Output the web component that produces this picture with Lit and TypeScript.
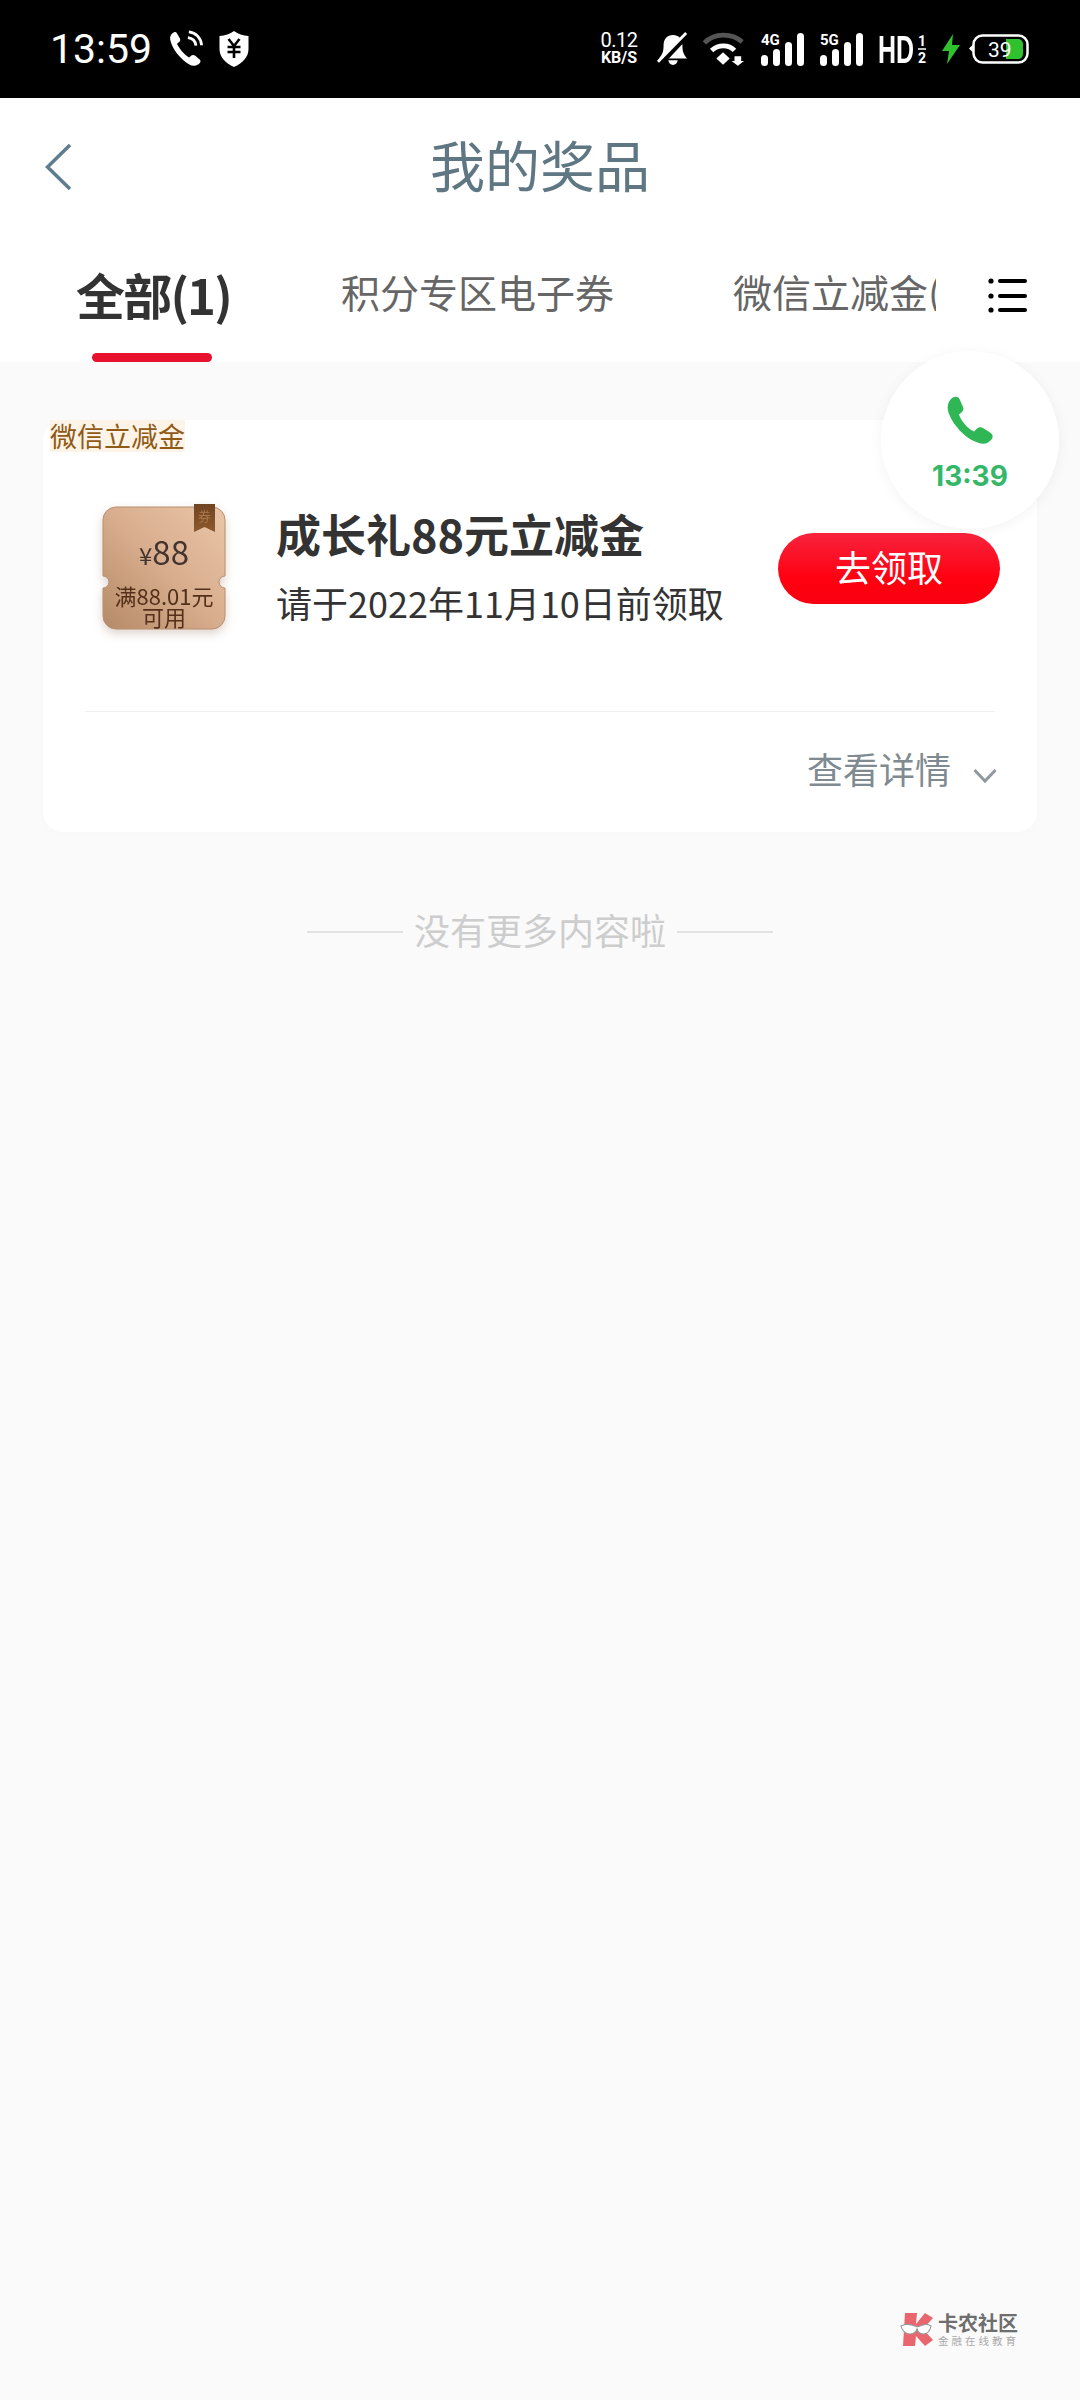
import { LitElement, html, css, svg } from "lit";
import { customElement } from "lit/decorators.js";

@customElement("app-root")
export class AppRoot extends LitElement {
  static styles = css`
    :host { display: block; width: 1080px; height: 2400px; position: relative; overflow: hidden; background: #fafafa; font-family: "Noto Sans CJK SC", "Noto Sans", sans-serif; }
    * { box-sizing: border-box; }
    svg { overflow: visible; }
    .status { height: 98px; background: #000; color: #fff; display: flex; align-items: center; padding: 0 51px 0 50px; }
    .time { font-family: Roboto, sans-serif; font-weight: 400; font-size: 41px; line-height: 1; width: 119px; }
    .left-ic { display: flex; gap: 16px; align-items: center; }
    .spacer { flex: 1; }
    .right { display: flex; align-items: center; }
    .speed { font-family: Roboto, sans-serif; width: 42px; display: flex; flex-direction: column; align-items: center; line-height: 1; margin-right: 17px; white-space: nowrap; margin-top: -2px; }
    .speed b { font-weight: 400; font-size: 20px; height: 19px; line-height: 19px; letter-spacing: -.5px; }
    .speed i { font-style: normal; font-weight: 700; font-size: 16px; height: 15px; line-height: 15px; }
    .hd { font-family: "Liberation Sans", sans-serif; font-weight: 700; font-size: 39px; line-height: 1; transform: scaleX(.64); transform-origin: left; width: 36px; margin-left: 15px; margin-right: 4px; }
    .mr14 { margin-right: 14px; } .mr15 { margin-right: 15px; } .mr16 { margin-right: 16px; } .mr9 { margin-right: 9px; }
    header { height: 134px; background: #fff; display: flex; align-items: center; justify-content: center; position: relative; }
    header h1 { margin: 0; font-size: 55px; font-weight: 400; color: #5f7683; line-height: 1; position: relative; top: -2px; }
    .back { position: absolute; left: 44px; top: 44px; }
    .tabs { height: 130px; background: #fff; display: flex; position: relative; align-items: flex-start; }
    .tab { font-size: 39px; color: #666; line-height: 1; white-space: nowrap; padding-top: 40px; }
    .tab.t1 { margin-left: 76px; font-size: 49px; font-weight: 700; color: #333; letter-spacing: -1.8px; padding-top: 37px; position: relative; height: 130px; width: 265px; }
    .tab.t2 { width: 392px; }
    .tab.t3 { width: 203px; overflow: hidden; }
    .bar { position: absolute; left: 16px; bottom: 0; width: 120px; height: 9px; border-radius: 5px; background: #e8112d; }
    .menu { margin-left: 52px; margin-top: 46px; }
    main { padding: 58px 43px 0; }
    .card { background: #fff; border-radius: 20px; height: 412px; position: relative; box-shadow: 0 2px 8px rgba(0,0,0,.015); display: flex; flex-direction: column; }
    .tag { position: absolute; left: 7px; top: 0; height: 32px; background: #fdf3e6; color: #8e5a16; font-size: 27px; line-height: 32px; width: 135px; white-space: nowrap; }
    .row { height: 291px; display: flex; align-items: center; padding: 0 37px 0 59px; }
    .coupon { width: 124px; height: 127px; flex: none; position: relative; margin-top: 4px; filter: drop-shadow(0 4px 5px rgba(120,80,50,.25)); }
    .coupon svg { position: absolute; inset: 0; }
    .amount { position: absolute; left: 0; right: 0; top: 29px; text-align: center; font-size: 33px; line-height: 36px; color: #443430; }
    .amount small { font-size: 24px; }
    .cond { position: absolute; left: 0; right: 0; top: 81px; text-align: center; font-size: 22px; line-height: 21px; color: #54301a; white-space: nowrap; }
    .info { margin-left: 50px; flex: 1; display: flex; flex-direction: column; margin-top: -1px; }
    .name { font-size: 45px; font-weight: 700; color: #333; line-height: 64px; white-space: nowrap; }
    .date { font-size: 36px; color: #333; line-height: 52px; margin-top: 10px; white-space: nowrap; }
    .go { width: 222px; height: 71px; flex: none; border-radius: 36px; background: linear-gradient(#f8233e, #ff0010 65%, #f90010); color: #fff; font-size: 36px; line-height: 66px; text-align: center; margin-top: 5px; }
    .divider { height: 1px; background: #f1f1f1; margin: 0 42px; }
    .more { flex: 1; display: flex; align-items: center; justify-content: flex-end; padding: 0 40px 8px 0; color: #808b91; font-size: 36px; }
    .more svg { margin-left: 22px; margin-top: 16px; }
    .end { display: flex; align-items: center; justify-content: center; margin-top: 67px; color: #cdcdcd; font-size: 36px; line-height: 60px; }
    .end span { width: 96px; height: 2px; background: #e2e2e2; margin-top: 6px; }
    .end em { font-style: normal; margin: 0 11px; }
    .float { position: absolute; left: 881px; top: 351px; width: 178px; height: 178px; border-radius: 50%; background: #fff; box-shadow: 0 2px 14px rgba(0,0,0,.05); display: flex; flex-direction: column; align-items: center; }
    .float svg { margin-top: 45px; }
    .float b { font-family: Inter, sans-serif; font-size: 28px; font-weight: 700; color: #35b768; line-height: 32px; margin-top: 16px; }
    .logo { position: absolute; left: 900px; top: 2312px; display: flex; align-items: flex-start; gap: 5px; }
    .logo div { display: flex; flex-direction: column; }
    .l1 { font-size: 20px; font-weight: 700; color: #6e6e6e; line-height: 22px; white-space: nowrap; }
    .l2 { font-size: 10.500px; color: #aaa; line-height: 12px; letter-spacing: 3px; white-space: nowrap; margin-top: 1px; }
  `;

  private signal(label: string, cls: string) {
    return html`<svg class=${cls} width="43" height="33" viewBox="0 0 43 33">
      <rect x="0" y="22" width="7" height="11" rx="3.500" fill="#fff"/>
      <rect x="12" y="16" width="7" height="17" rx="3.500" fill="#fff"/>
      <rect x="24" y="9" width="7" height="24" rx="3.500" fill="#fff"/>
      <rect x="36" y="0" width="7" height="33" rx="3.500" fill="#fff"/>
      <text x="0" y="12" font-family="Roboto, sans-serif" font-size="15" font-weight="700" fill="#fff">${label}</text>
    </svg>`;
  }

  render() {
    return html`
      <div class="status">
        <div class="time">13:59</div>
        <div class="left-ic">
          <svg width="34" height="38" viewBox="0 0 36 38" fill="none">
            <path d="M5 1.500C2 3 .5 6 1.500 10c2 9 10 19 20 25.500 3 1.800 7 2 10-.5 2-1.700 2.500-3.500 1-5l-5-4c-1.500-1-3-.8-4.200.2l-2 1.800C16 25 10.500 18 8.500 13.500l2.300-2c1.200-1.200 1.400-2.500.7-4L8.500 2.500C7.500 1 6.500.8 5 1.500Z" fill="#fff"/>
            <path d="M20 7c5 .5 8 4 8.500 8.500M21 .8C28.500 1.500 34 7.500 34.500 15" stroke="#fff" stroke-width="3"/>
          </svg>
          <svg width="30" height="36" viewBox="0 0 30 36">
            <path d="M15 0c4 3 9 4.500 14.500 5v13c0 8-6 14-14.500 18C6.500 32 .5 26 .5 18V5C6 4.500 11 3 15 0Z" fill="#fff"/>
            <path d="M9.500 8 15 15l5.500-7M8.500 16h13M8.500 21h13M15 15v12" stroke="#000" stroke-width="2.600" fill="none"/>
          </svg>
        </div>
        <div class="spacer"></div>
        <div class="right">
          <div class="speed"><b>0.12</b><i>KB/S</i></div>
          <svg class="mr14" width="32" height="36" viewBox="0 0 34 36">
            <path d="M17 3c6 0 10 4 10 11 0 6 1 10 5 14H2c4-4 5-8 5-14C7 7 11 3 17 3Z" fill="#fff"/>
            <path d="M12 30h10c-.5 3-2.500 5-5 5s-4.500-2-5-5Z" fill="#fff"/>
            <path d="M4 33 32 3" stroke="#000" stroke-width="6"/>
            <path d="M1 31.500 31 1" stroke="#fff" stroke-width="3"/>
          </svg>
          <svg class="mr16" width="42" height="33" viewBox="0 0 44 34">
            <path d="M1.500 10C12-.5 30-.5 41 9" stroke="#555" stroke-width="5" fill="none"/>
            <path d="M9 18c7-6.500 18-6.500 24 0" stroke="#fff" stroke-width="5" fill="none"/>
            <path d="M14 26.500 21 20l7 6.500-7 6.500Z" fill="#fff"/>
            <path d="M33 24h7v5h3l-6.500 5-6.500-5h3Z" fill="#fff"/>
          </svg>
          ${this.signal("4G", "mr16")}
          ${this.signal("5G", "")}
          <div class="hd">HD</div>
          <svg class="mr16" width="8" height="30" viewBox="0 0 8 30">
            <text x="0" y="12" font-family="Roboto, sans-serif" font-size="14" font-weight="700" fill="#fff">1</text>
            <path d="M0 15h8" stroke="#fff" stroke-width="1.500"/>
            <text x="0" y="29" font-family="Roboto, sans-serif" font-size="14" font-weight="700" fill="#fff">2</text>
          </svg>
          <svg class="mr9" width="18" height="30" viewBox="0 0 18 30">
            <path d="M11 0 0 17h7L5 30 18 11h-8Z" fill="#2fc22e"/>
          </svg>
          <svg width="60" height="30" viewBox="0 0 60 30">
            <path d="M3 12.500v4l-2-2Z" fill="#fff" stroke="#fff" stroke-width="1.500"/>
            <rect x="4.500" y="1.500" width="54" height="27" rx="9" fill="none" stroke="#fff" stroke-width="2.500"/>
            <path d="M37 5h12c3 0 5 2 5 6v8c0 4-2 6-5 6H37Z" fill="#2fc22e"/>
            <text x="19" y="22.500" font-family="Roboto, sans-serif" font-size="21" fill="#fff">39</text>
          </svg>
        </div>
      </div>

      <header>
        <svg class="back" width="30" height="50" viewBox="0 0 30 50" fill="none"><path d="M26 3 3.500 25 26 47" stroke="#5f7d8f" stroke-width="3.500"/></svg>
        <h1>我的奖品</h1>
      </header>

      <nav class="tabs">
        <div class="tab t1">全部(1)<div class="bar"></div></div>
        <div class="tab t2">积分专区电子券</div>
        <div class="tab t3">微信立减金(1)</div>
        <svg class="menu" width="40" height="36" viewBox="0 0 40 36">
          ${[3, 18, 32].map(
            (y) => svg`<circle cx="3" cy=${y} r="2.600" fill="#000"/><rect x="10" y=${y - 2} width="29" height="4" rx="2" fill="#000"/>`
          )}
        </svg>
      </nav>

      <main>
        <section class="card">
          <div class="tag">微信立减金</div>
          <div class="row">
            <div class="coupon">
              <svg width="124" height="127" viewBox="0 0 124 127">
                <defs>
                  <linearGradient id="cg" x1="1" y1="0" x2="0" y2="1">
                    <stop offset="0" stop-color="#eac6a8"/>
                    <stop offset=".5" stop-color="#d8ad8d"/>
                    <stop offset="1" stop-color="#b58a68"/>
                  </linearGradient>
                  <linearGradient id="bm" x1="0" y1="0" x2="0" y2="1">
                    <stop offset="0" stop-color="#704322"/>
                    <stop offset="1" stop-color="#8d5a2c"/>
                  </linearGradient>
                </defs>
                <path d="M14 3H110a13 13 0 0 1 13 13V72a6 6 0 0 0 0 12V112a13 13 0 0 1-13 13H14A13 13 0 0 1 1 112V84a6 6 0 0 0 0-12V16A13 13 0 0 1 14 3Z" fill="url(#cg)" stroke="#b98e6e" stroke-width="1"/>
                <path d="M92 0h21v28l-10.500-5L92 28Z" fill="url(#bm)"/>
                <text x="96" y="17" font-size="13" fill="#a9764a" font-family="Noto Sans CJK SC, sans-serif">券</text>
              </svg>
              <div class="amount"><small>¥</small>88</div>
              <div class="cond">满88.01元<br />可用</div>
            </div>
            <div class="info">
              <div class="name">成长礼88元立减金</div>
              <div class="date">请于2022年11月10日前领取</div>
            </div>
            <div class="go">去领取</div>
          </div>
          <div class="divider"></div>
          <div class="more">查看详情
            <svg width="24" height="16" viewBox="0 0 24 16" fill="none"><path d="M1.500 2 12 13 22.500 2" stroke="#8f999e" stroke-width="3"/></svg>
          </div>
        </section>
        <div class="end"><span></span><em>没有更多内容啦</em><span></span></div>
      </main>

      <div class="float">
        <svg width="46" height="48" viewBox="0 0 46 48">
          <path d="M4 3C7 0 11 0 12.500 3L16 11C17 13.500 16 15 14.500 16.500L12 18.500C14 25 21 33 27 35.500L30 32.500C32 31 34 31 36 32L43 36.500C46 38.500 46.500 41 44.500 43.500C41 47.500 37 48.500 32 47C18 43 5 28 1 15C0 10 1 6 4 3Z" fill="#2fb655"/>
        </svg>
        <b>13:39</b>
      </div>

      <div class="logo">
        <svg width="33" height="34" viewBox="0 0 33 34">
          <path d="M5 1H17L16 12 25 1l8 5-10 11 10 11-8 6-9-10-1 10H3Z" fill="#e9666f"/>
          <path d="M1 14c4-2 9-2 14 0 2 1 3 1 5 0 4-2 8-2 11 0-1 5-4 8-8 8-3 0-5-2-6-5-1 3-3 5-7 5S2 19 1 14Z" fill="#fff" stroke="#9a9a9a" stroke-width="1.200"/>
        </svg>
        <div>
          <span class="l1">卡农社区</span>
          <span class="l2">金融在线教育</span>
        </div>
      </div>
    `;
  }
}
